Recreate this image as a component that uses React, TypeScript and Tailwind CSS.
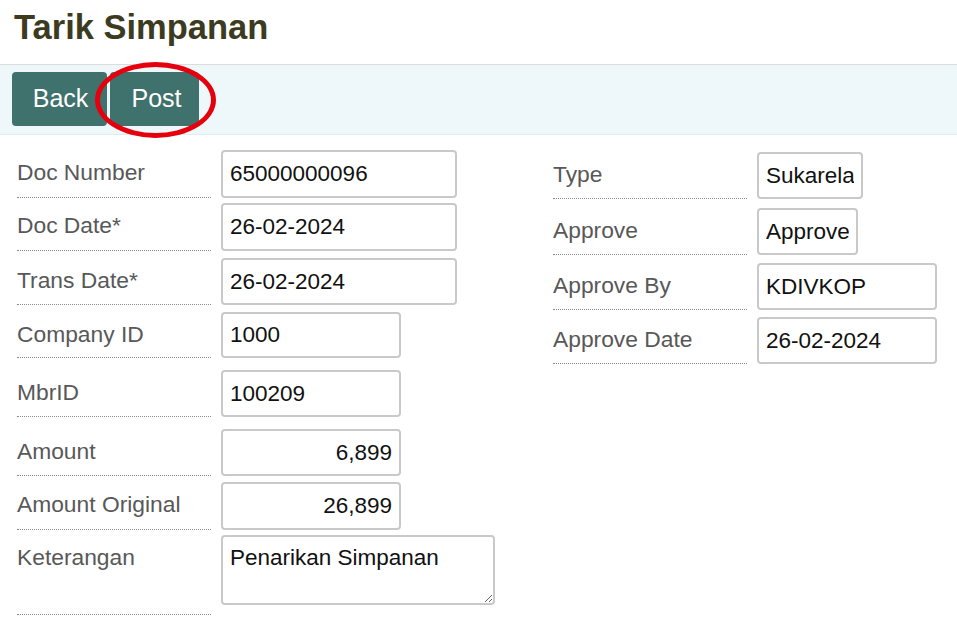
import React from 'react';

const font = { fontFamily: '"Liberation Sans", Arial, sans-serif' };

type Field = {
	label: string;
	value: string;
	row: string;
	box: string;
	right?: boolean;
};

const leftFields: Field[] = [
	{ label: 'Doc Number', value: '65000000096', row: 'mt-0', box: 'h-[48px] w-[236px]' },
	{ label: 'Doc Date*', value: '26-02-2024', row: 'mt-[5px]', box: 'h-[48px] w-[236px]' },
	{ label: 'Trans Date*', value: '26-02-2024', row: 'mt-[7px]', box: 'h-[47px] w-[236px]' },
	{ label: 'Company ID', value: '1000', row: 'mt-[7px]', box: 'h-[46px] w-[180px]' },
	{ label: 'MbrID', value: '100209', row: 'mt-[12px]', box: 'h-[47px] w-[180px]' },
	{ label: 'Amount', value: '6,899', row: 'mt-[12px]', box: 'h-[47px] w-[180px]', right: true },
	{ label: 'Amount Original', value: '26,899', row: 'mt-[6px]', box: 'h-[48px] w-[180px]', right: true },
];

const rightFields: Field[] = [
	{ label: 'Type', value: 'Sukarela', row: 'mt-0', box: 'h-[47px] w-[106px]' },
	{ label: 'Approve', value: 'Approve', row: 'mt-[9px]', box: 'h-[47px] w-[101px]' },
	{ label: 'Approve By', value: 'KDIVKOP', row: 'mt-[8px]', box: 'h-[47px] w-[180px]' },
	{ label: 'Approve Date', value: '26-02-2024', row: 'mt-[7px]', box: 'h-[47px] w-[180px]' },
];

const inputCls = 'border-2 border-[#c9c9c9] rounded-[4px] px-[7px] text-[22.5px] text-[#111] bg-white outline-none';
const labelCls = 'w-[194px] shrink-0 border-b border-dotted border-[#8a8a8a] pt-[9px] text-[22.8px] leading-[26px] text-[#585858]';

const Row = ({ f }: { f: Field }) => (
	<div className={`flex ${f.row}`}>
		<div className={labelCls}>{f.label}</div>
		<input
			readOnly
			value={f.value}
			style={font}
			className={`ml-[10px] ${f.box} ${inputCls} ${f.right ? 'text-right' : 'text-left'}`}
		/>
	</div>
);

const App = () => {
	return (
		<div className="w-[957px] h-[628px] bg-white overflow-hidden" style={font}>
			<h1 className="pt-[7px] pl-[14px] text-[34.5px] leading-[40px] font-bold text-[#3d3b1f]">Tarik Simpanan</h1>

			<div className="relative mt-[17px] border-t border-[#dcdcdc] border-b border-b-[#dcecef] bg-[#eef7f9] pt-[7px] pb-[8px] pl-[12px]">
				<div className="flex gap-[3px]">
					<button className="h-[54px] w-[95px] pl-[2px] rounded-[4px] bg-[#3f716d] text-[25px] text-white">Back</button>
					<button className="h-[54px] w-[89px] pl-[4px] rounded-[4px] bg-[#3f716d] text-[25px] text-white">Post</button>
				</div>
				<div className="absolute left-[95px] top-[-3px] w-[121px] h-[76px] rounded-[50%] border-[5px] border-[#e5000e]"></div>
			</div>

			<div className="flex mt-[15px]">
				<div className="w-[553px] shrink-0 pl-[17px]">
					{leftFields.map((f) => (
						<Row key={f.label} f={f} />
					))}
					<div className="flex mt-[5px]">
						<div className={`${labelCls} h-[80px]`}>Keterangan</div>
						<textarea
							readOnly
							value="Penarikan Simpanan"
							style={font}
							className={`ml-[10px] h-[70px] w-[274px] pt-[8px] leading-[26px] ${inputCls}`}
						/>
					</div>
				</div>
				<div className="pt-[2px]">
					{rightFields.map((f) => (
						<Row key={f.label} f={f} />
					))}
				</div>
			</div>
		</div>
	);
};

export default App;
